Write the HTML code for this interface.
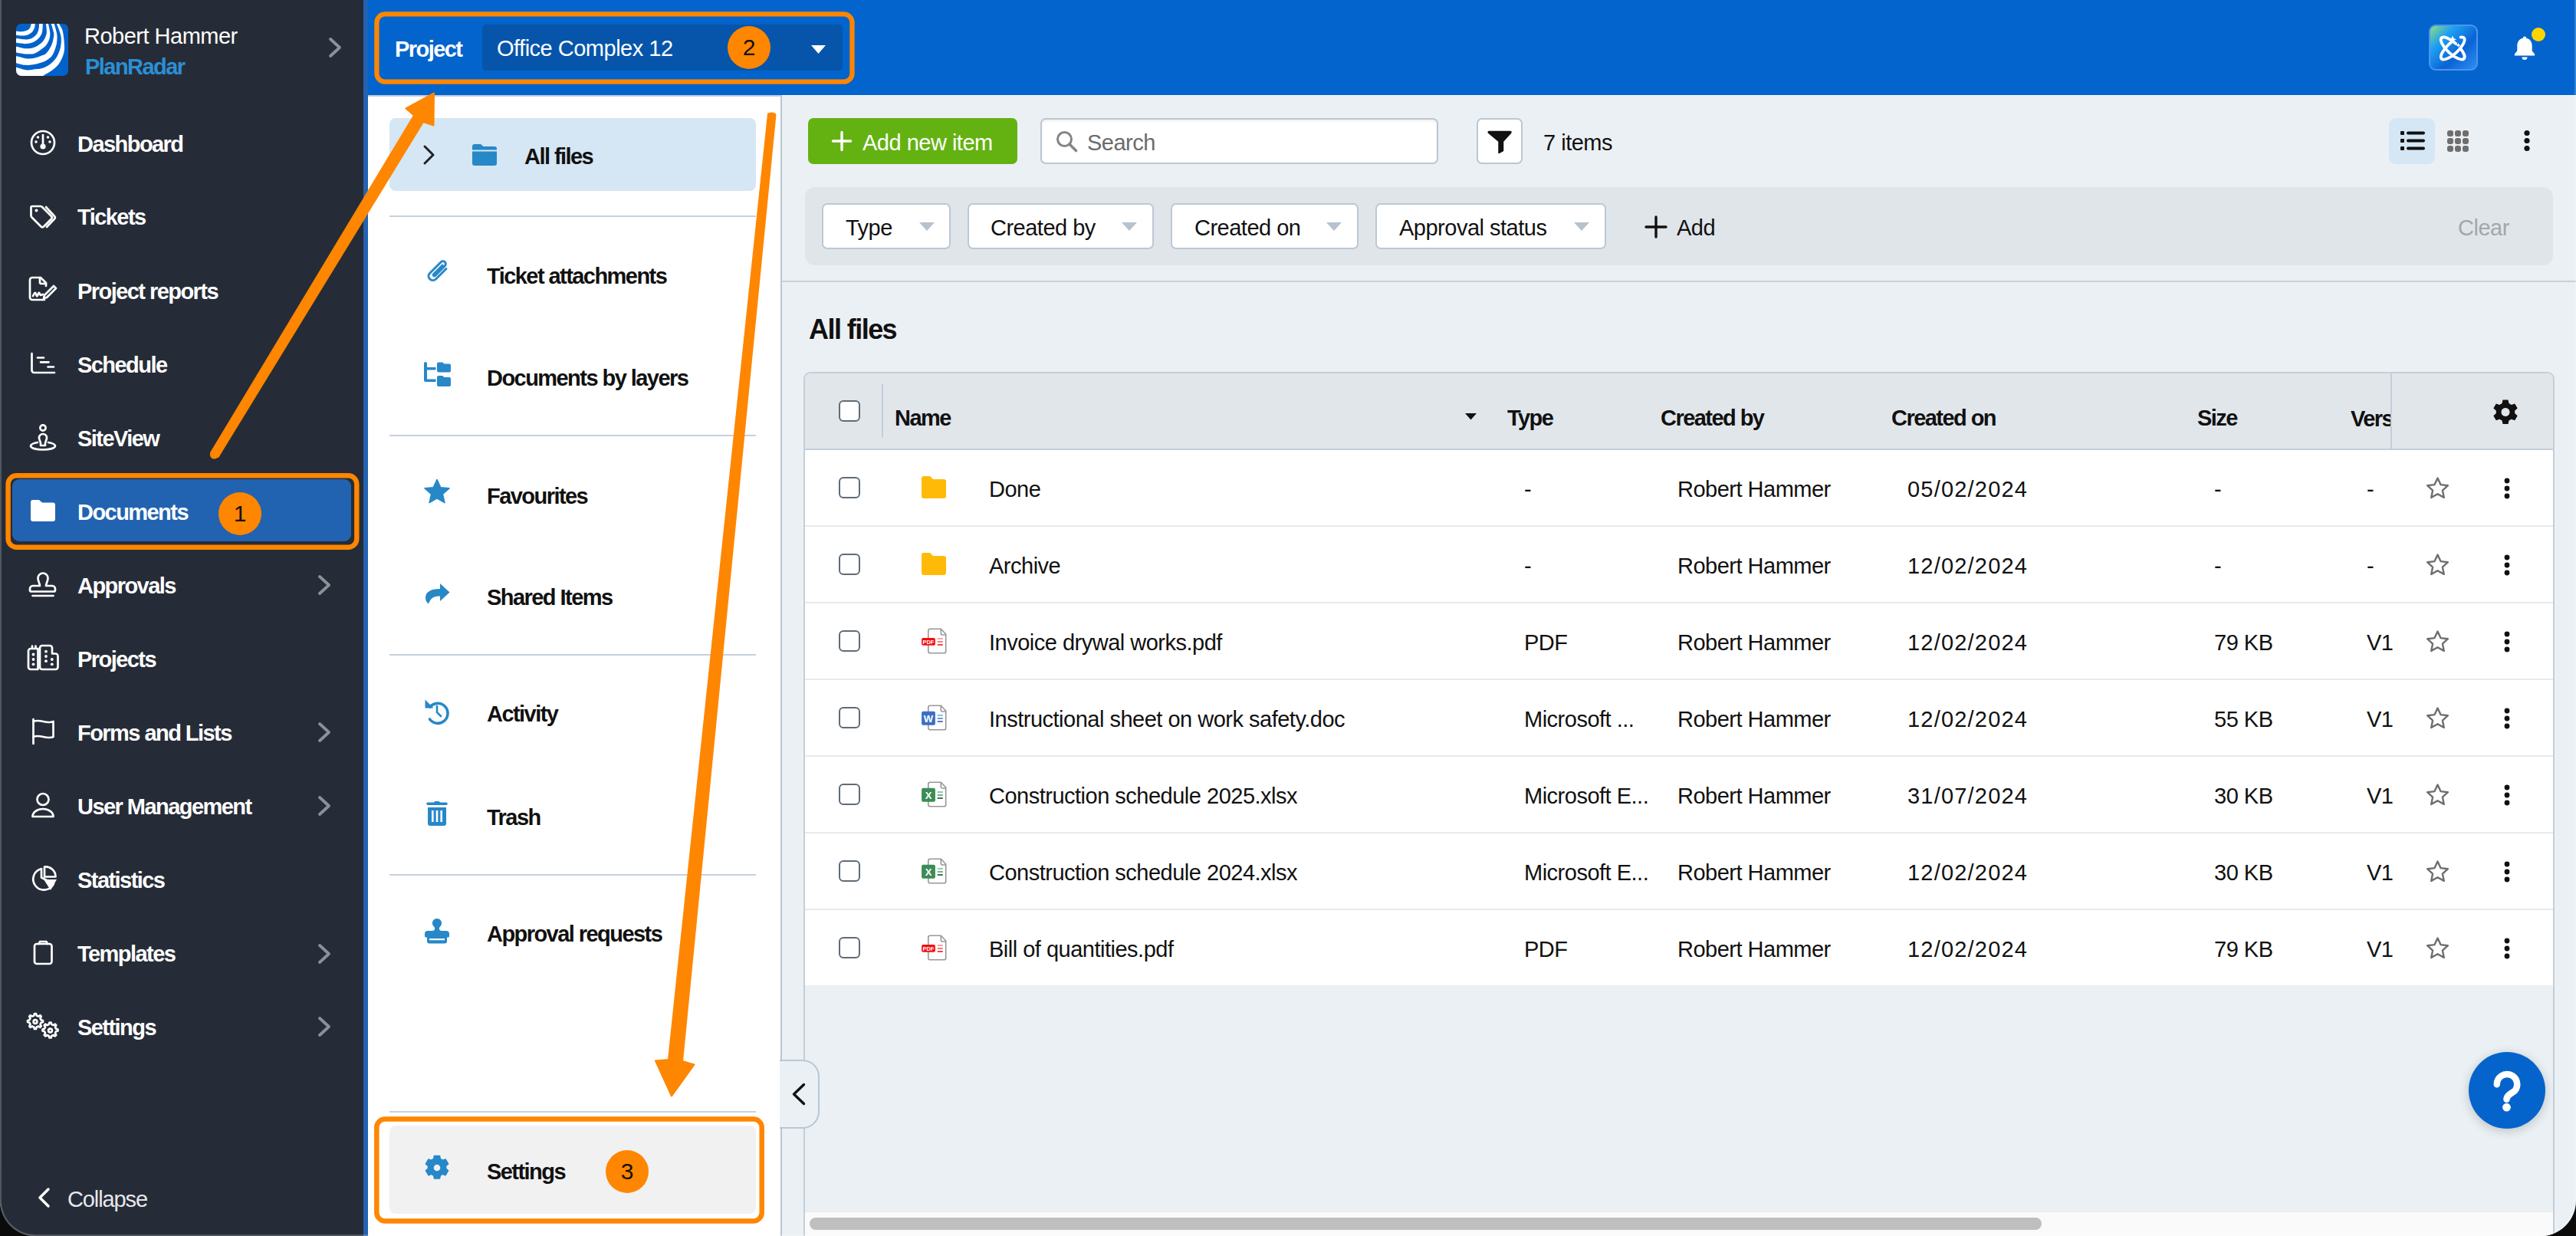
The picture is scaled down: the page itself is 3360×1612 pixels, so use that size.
<!DOCTYPE html>
<html><head><meta charset="utf-8">
<style>
*{margin:0;padding:0;box-sizing:border-box}
html,body{width:3360px;height:1612px;overflow:hidden;background:#0b0b0c;font-family:"Liberation Sans",sans-serif}
.a{position:absolute}
.t{position:absolute;white-space:nowrap;font-size:29px;line-height:28px;color:#111;letter-spacing:-0.5px;margin-top:1px;margin-left:-1px}
.b{font-weight:bold;letter-spacing:-1.55px;margin-left:0}
svg{position:absolute;overflow:visible}
#app{left:0;top:0;width:3360px;height:1612px;border-radius:0 0 46px 46px;overflow:hidden;background:#ebf0f4}
/* sidebar */
#side{left:0;top:0;width:480px;height:1612px;background:#262c37}
.si{color:#fff}
.chev{stroke:#8b9099;stroke-width:3.8;fill:none;stroke-linecap:round;stroke-linejoin:round}
.ico{stroke:#fff;stroke-width:2.7;fill:none;stroke-linecap:round;stroke-linejoin:round}
/* top bar */
#top{left:480px;top:0;width:2880px;height:124px;background:#0264cc}
/* panel */
#panel{left:480px;top:124px;width:540px;height:1488px;background:#fff;border-right:2px solid #b9c5d1;border-top:2px solid #c6cdd4}
.pi{color:#111}
.pico{fill:#2788c8}
.sep{position:absolute;left:508px;width:478px;height:2px;background:#c6d1dc}
/* main */
.chip{position:absolute;top:265px;height:60px;background:#fff;border:2px solid #bcc8d4;border-radius:7px}
.caret{position:absolute;width:0;height:0;border-left:10px solid transparent;border-right:10px solid transparent;border-top:10px solid #b5c1cd}
.cb{position:absolute;left:1094px;width:28px;height:28px;border:2.5px solid #5f6b78;border-radius:6px;background:#fff}
.row{position:absolute;left:1050px;width:2280px;height:2px;background:#e6eaee}
.star{fill:none;stroke:#6e6e6e;stroke-width:2.4;stroke-linejoin:round}
.keb{fill:#111}
.orange{border:5px solid #ff8600}
.badge{position:absolute;width:56px;height:56px;border-radius:50%;background:#ff8600;color:#111;font-size:30px;line-height:56px;text-align:center}
</style></head><body>
<div id="app" class="a">

<!-- ================= SIDEBAR ================= -->
<div id="side" class="a">
  
  <div class="a" style="left:474px;top:0;width:6px;height:1612px;background:#2363b3"></div>
  <!-- logo -->
  <svg style="left:21px;top:31px" width="68" height="68" viewBox="0 0 68 68">
    <defs><clipPath id="lc"><rect x="0" y="0" width="68" height="68" rx="7"/></clipPath></defs>
    <rect x="0" y="0" width="68" height="68" rx="7" fill="#0262cc"/>
    <g clip-path="url(#lc)" fill="#fff">
    <path d="M19.8,0 C19.48,0.92 18.90,4.03 17.90,5.50 C16.90,6.97 15.63,8.02 13.80,8.80 C11.97,9.58 9.20,10.10 6.90,10.20 C4.60,10.30 1.15,9.53 0.00,9.40 L0,15.1 C0.92,15.15 3.20,15.40 5.50,15.40 C7.80,15.40 11.28,15.83 13.80,15.10 C16.32,14.37 18.92,12.60 20.60,11.00 C22.28,9.40 23.20,7.33 23.90,5.50 C24.60,3.67 24.65,0.92 24.80,0.00Z"/>
    <path d="M30,0 C29.95,0.92 30.12,3.43 29.70,5.50 C29.28,7.57 28.78,10.33 27.50,12.40 C26.22,14.47 24.28,16.57 22.00,17.90 C19.72,19.23 16.55,20.08 13.80,20.40 C11.05,20.72 7.80,20.03 5.50,19.80 C3.20,19.57 0.92,19.13 0.00,19.00 L0,24.8 C0.92,24.93 3.20,25.38 5.50,25.60 C7.80,25.82 10.82,26.47 13.80,26.10 C16.78,25.73 20.65,24.77 23.40,23.40 C26.15,22.03 28.53,19.97 30.30,17.90 C32.07,15.83 33.25,13.98 34.00,11.00 C34.75,8.02 34.67,1.83 34.80,0.00Z"/>
    <path d="M39,0 C39.13,1.38 39.72,5.96 39.80,8.25 C39.88,10.54 39.92,11.91 39.50,13.75 C39.08,15.59 38.22,17.59 37.30,19.30 C36.38,21.01 35.63,22.40 34.00,24.00 C32.37,25.60 29.95,27.58 27.50,28.90 C25.05,30.22 22.05,31.35 19.30,31.90 C16.55,32.45 13.76,32.47 11.00,32.20 C8.24,31.93 4.58,30.72 2.75,30.30 C0.92,29.88 0.46,29.80 0.00,29.70 L0,37.6 C1.38,37.83 5.50,38.63 8.25,38.95 C11.00,39.27 13.74,39.59 16.50,39.50 C19.26,39.41 21.88,39.57 24.80,38.40 C27.72,37.23 31.55,34.32 34.00,32.50 C36.45,30.68 37.90,29.70 39.50,27.50 C41.10,25.30 42.82,22.05 43.60,19.30 C44.38,16.55 44.47,14.22 44.20,11.00 C43.93,7.78 42.37,1.83 42.00,0.00Z"/>
    <path d="M45.8,0 C46.32,1.83 48.35,8.25 48.90,11.00 C49.45,13.75 49.43,13.98 49.10,16.50 C48.77,19.02 47.95,23.18 46.90,26.10 C45.85,29.02 44.27,31.77 42.80,34.00 C41.33,36.23 39.57,38.28 38.10,39.50 C36.63,40.72 36.22,40.47 34.00,41.30 C31.78,42.13 27.72,43.78 24.80,44.50 C21.88,45.22 19.26,45.65 16.50,45.60 C13.74,45.55 11.00,44.78 8.25,44.20 C5.50,43.62 1.38,42.45 0.00,42.10 L0,51.2 C1.83,51.63 7.33,53.45 11.00,53.80 C14.67,54.15 18.17,53.90 22.00,53.30 C25.83,52.70 31.08,51.12 34.00,50.20 C36.92,49.28 37.43,49.08 39.50,47.75 C41.57,46.42 44.57,44.54 46.40,42.25 C48.23,39.96 49.40,36.91 50.50,34.00 C51.60,31.09 52.53,28.18 53.00,24.80 C53.47,21.43 53.85,17.88 53.30,13.75 C52.75,9.62 50.30,2.29 49.70,0.00Z"/>
    <path d="M53,0 C53.82,2.29 56.93,9.85 57.90,13.75 C58.87,17.65 58.95,20.02 58.80,23.40 C58.65,26.77 58.15,30.40 57.00,34.00 C55.85,37.60 54.13,41.79 51.90,45.00 C49.67,48.21 46.58,51.08 43.60,53.25 C40.62,55.42 37.13,56.99 34.00,58.00 C30.87,59.01 28.18,58.90 24.80,59.30 C21.43,59.70 17.88,60.82 13.75,60.40 C9.62,59.98 2.29,57.40 0.00,56.80 L0,68 L35,68 C35.29,67.83 34.62,68.32 36.75,67.00 C38.88,65.68 44.54,62.62 47.75,60.10 C50.96,57.58 53.79,54.88 56.00,51.90 C58.21,48.92 59.85,45.23 61.00,42.25 C62.15,39.27 62.58,36.46 62.90,34.00 C63.22,31.54 63.00,29.95 62.90,27.50 C62.80,25.05 62.72,22.51 62.30,19.30 C61.88,16.09 61.45,11.47 60.40,8.25 C59.35,5.03 56.73,1.38 56.00,0.00Z"/>
    </g>
  </svg>
  <div class="t" style="left:111px;top:32px;color:#fff">Robert Hammer</div>
  <div class="t b" style="left:111px;top:72px;color:#2a8fd6">PlanRadar</div>
  <svg style="left:0;top:0" width="480" height="1612">
    <polyline class="chev" points="431,51 443,62 431,73"/>
    <polyline class="chev" points="417,752 429,763 417,774"/>
    <polyline class="chev" points="417,944 429,955 417,966"/>
    <polyline class="chev" points="417,1040 429,1051 417,1062"/>
    <polyline class="chev" points="417,1233 429,1244 417,1255"/>
    <polyline class="chev" points="417,1328 429,1339 417,1350"/>
  </svg>
  <!-- active documents -->
  <svg style="left:0;top:600px" width="480" height="130"><rect x="10.6" y="20.2" width="454.7" height="93.5" rx="11" fill="none" stroke="#ff8600" stroke-width="6.4"/></svg>
  <div class="a" style="left:16px;top:625px;width:442px;height:81px;background:#2163b0;border-radius:9px"></div>
  <!-- icons -->
  <svg style="left:0;top:0" width="480" height="1612">
    <g class="ico">
      <!-- dashboard -->
      <circle cx="56" cy="186" r="15"/>
      <line x1="56" y1="176" x2="56" y2="189"/>
    </g>
    <g fill="#fff">
      <circle cx="56" cy="191" r="3.6"/>
      <circle cx="47" cy="185" r="1.8"/><circle cx="49.5" cy="179" r="1.8"/>
      <circle cx="62.5" cy="179" r="1.8"/><circle cx="65" cy="185" r="1.8"/>
    </g>
    <g class="ico">
      <!-- tickets -->
      <path d="M42,269 h11 a3,3 0 0 1 2,1 l12,12 a2.5,2.5 0 0 1 0,3.5 l-10,10 a2.5,2.5 0 0 1 -3.5,0 l-12,-12 a3,3 0 0 1 -1,-2 v-11 a1.5,1.5 0 0 1 1.5,-1.5z"/>
      <path d="M60,270 l11,12 a2.5,2.5 0 0 1 0,3.5 l-10,10.5"/>
    </g>
    <circle cx="47.5" cy="274.5" r="2" fill="#fff"/>
    <g class="ico">
      <!-- project reports -->
      <path d="M58,391 h-16 a3,3 0 0 1 -3,-3 v-23 a3,3 0 0 1 3,-3 h11 l7,7 v4"/>
      <path d="M52,362 v6 a2,2 0 0 0 2,2 h6"/>
      <path d="M43,386 c2,-4 3,-6 4,-2 c1,3 2,3 3,-1 c1,-3 2,1 3,2 l3,-1"/>
      <path d="M58,385 l12,-12 l3,3 l-12,12 l-4,1z"/>
      <!-- schedule -->
      <path d="M41.5,461 v22 a3,3 0 0 0 3,3 h26.5"/>
      <path d="M49,466.5 h8 M53,472.3 h10.5 M62.5,478.5 h7.5"/>
      <!-- siteview -->
      <circle cx="56" cy="558" r="3.6"/>
      <path d="M51,571 a5,5 0 0 1 10,0 c0,3 -2,5 -2,7 v3 h-6 v-3 c0,-2 -2,-4 -2,-7z"/>
      <path d="M49,577 c-5,1 -9,2.5 -9,4.5 c0,3 7,5 16,5 c9,0 16,-2 16,-5 c0,-2 -4,-3.5 -9,-4.5"/>
      <!-- approvals -->
      <path d="M52,764 c0,-3 -2.5,-6 -2.5,-10 a6.5,6.5 0 0 1 13,0 c0,4 -2.5,7 -2.5,10 h8 a4,4 0 0 1 4,4 v1.5 a2,2 0 0 1 -2,2 h-29 a2,2 0 0 1 -2,-2 v-1.5 a4,4 0 0 1 4,-4z"/>
      <path d="M42.5,777 h27"/>
      <!-- projects -->
      <path d="M49.5,846 v27 h-9.5 a3,3 0 0 1 -3,-3 v-21 a3,3 0 0 1 3,-3z M42,846 v-3.5 M46.5,846 v-3.5"/>
      <path d="M55,873 a3,3 0 0 1 -3,-3 v-25 a3,3 0 0 1 3,-3 h10 a3,3 0 0 1 3,3 v7.5 h4.5 a3,3 0 0 1 3,3 v14.5 a3,3 0 0 1 -3,3z"/>
      <!-- forms -->
      <path d="M43.5,938 v32"/>
      <path d="M43.5,941 c9,-4 17,4 26,0 v20 c-9,4 -17,-4 -26,0"/>
      <!-- user -->
      <circle cx="56" cy="1042.5" r="7.5"/>
      <path d="M42.5,1065 h27 a13.5,10 0 0 0 -27,0z"/>
      <!-- statistics -->
      <path d="M54,1133 a14,14 0 1 0 16,19.5 l-16,-8z"/>
      <path d="M58,1130.5 a13,13 0 0 1 14.5,13 h-14.5z"/>
      <!-- templates -->
      <rect x="45" y="1231" width="22.5" height="26" rx="3"/>
      <path d="M50.5,1231 l1.5,-3 h8.5 l1.5,3"/>
    </g>
    <path d="M57,1147 h17 l-8,14z" fill="#fff"/>
    <g fill="#fff"><circle cx="43.5" cy="853.5" r="1.9"/><circle cx="43.5" cy="860" r="1.9"/><circle cx="43.5" cy="866.3" r="1.9"/>
    <circle cx="60" cy="849.7" r="1.9"/><circle cx="60" cy="856" r="1.9"/><circle cx="60" cy="862.2" r="1.9"/><circle cx="67.8" cy="860" r="1.9"/><circle cx="67.8" cy="866.3" r="1.9"/></g>
    <!-- documents folder filled -->
    <path d="M40,655 a3,3 0 0 1 3,-3 h8 l4,3.5 h14 a3,3 0 0 1 3,3 v18.5 a3,3 0 0 1 -3,3 h-26 a3,3 0 0 1 -3,-3z" fill="#fff"/>
    <!-- settings gears -->
    <g class="ico" stroke-width="2.2">
      <path transform="translate(0,5.5)" d="M45,1316.5 l2,0 l0.8,2.5 l2.3,1 l2.3,-1.3 l1.4,1.4 l-1.3,2.3 l1,2.3 l2.5,0.8 v2 l-2.5,0.8 l-1,2.3 l1.3,2.3 l-1.4,1.4 l-2.3,-1.3 l-2.3,1 l-0.8,2.5 h-2 l-0.8,-2.5 l-2.3,-1 l-2.3,1.3 l-1.4,-1.4 l1.3,-2.3 l-1,-2.3 l-2.5,-0.8 v-2 l2.5,-0.8 l1,-2.3 l-1.3,-2.3 l1.4,-1.4 l2.3,1.3 l2.3,-1 z"/>
      <circle cx="46" cy="1332.5" r="2.4"/>
      <path transform="translate(19.5,17)" d="M45,1316.5 l2,0 l0.8,2.5 l2.3,1 l2.3,-1.3 l1.4,1.4 l-1.3,2.3 l1,2.3 l2.5,0.8 v2 l-2.5,0.8 l-1,2.3 l1.3,2.3 l-1.4,1.4 l-2.3,-1.3 l-2.3,1 l-0.8,2.5 h-2 l-0.8,-2.5 l-2.3,-1 l-2.3,1.3 l-1.4,-1.4 l1.3,-2.3 l-1,-2.3 l-2.5,-0.8 v-2 l2.5,-0.8 l1,-2.3 l-1.3,-2.3 l1.4,-1.4 l2.3,1.3 l2.3,-1 z"/>
      <circle cx="65.5" cy="1344" r="2.4"/>
    </g>
    <!-- collapse chevron -->
    <polyline points="63,1551 52,1562 63,1573" fill="none" stroke="#fff" stroke-width="3.5" stroke-linecap="round" stroke-linejoin="round"/>
  </svg>
  <div class="t b si" style="left:101px;top:173px">Dashboard</div>
  <div class="t b si" style="left:101px;top:268px">Tickets</div>
  <div class="t b si" style="left:101px;top:365px">Project reports</div>
  <div class="t b si" style="left:101px;top:461px">Schedule</div>
  <div class="t b si" style="left:101px;top:557px">SiteView</div>
  <div class="t b si" style="left:101px;top:653px">Documents</div>
  <div class="t b si" style="left:101px;top:749px">Approvals</div>
  <div class="t b si" style="left:101px;top:845px">Projects</div>
  <div class="t b si" style="left:101px;top:941px">Forms and Lists</div>
  <div class="t b si" style="left:101px;top:1037px">User Management</div>
  <div class="t b si" style="left:101px;top:1133px">Statistics</div>
  <div class="t b si" style="left:101px;top:1229px">Templates</div>
  <div class="t b si" style="left:101px;top:1325px">Settings</div>
  <div class="t" style="left:89px;top:1549px;color:#e6e8eb;letter-spacing:-1.1px">Collapse</div>
  <div class="badge" style="left:285px;top:642px">1</div>
</div>

<!-- ================= TOP BAR ================= -->
<div id="top" class="a">
</div>
<div class="a" style="left:1020px;top:124px;width:2340px;height:1px;background:#fafaf9"></div>
<!-- project selector -->
<svg style="left:480px;top:0" width="660" height="124"><rect x="11.4" y="18.4" width="620.1" height="88.3" rx="11" fill="none" stroke="#ff8600" stroke-width="6.3"/></svg>
<div class="t b" style="left:515px;top:49px;color:#fff">Project</div>
<div class="a" style="left:629px;top:32px;width:470px;height:60px;background:#0755aa;border-radius:5px"></div>
<div class="t" style="left:649px;top:48px;color:#fff">Office Complex 12</div>
<div class="badge" style="left:949px;top:34px">2</div>
<svg style="left:1058px;top:59px" width="19" height="12"><path d="M0,0 h19 l-9.5,11z" fill="#fff"/></svg>
<!-- AI button -->
<div class="a" style="left:3168px;top:32px;width:64px;height:60px;border-radius:9px;border:2px solid #4c93f0;background:linear-gradient(135deg,#8fe07a 0%,#1ea0f4 28%,#0b63d4 62%,#2f8df2 100%)"></div>
<svg style="left:3168px;top:32px" width="64" height="60" viewBox="0 0 64 60">
  <g fill="none" stroke="#fff" stroke-width="3.8" stroke-linecap="round">
    <ellipse cx="31.2" cy="31" rx="20" ry="7.2" transform="rotate(43 31.2 31)" stroke-dasharray="66 9 200"/>
    <ellipse cx="31.2" cy="31" rx="20" ry="7.2" transform="rotate(-43 31.2 31)" stroke-dasharray="73 12 200"/>
  </g>
  <path d="M31,14.5 l1.6,3.4 l3.4,1.6 l-3.4,1.6 l-1.6,3.4 l-1.6,-3.4 l-3.4,-1.6 l3.4,-1.6z" fill="#fff"/>
  <path d="M38.5,24 l1,2 l2,1 l-2,1 l-1,2 l-1,-2 l-2,-1 l2,-1z" fill="#fff"/>
</svg>
<!-- bell -->
<svg style="left:3278px;top:46px" width="30" height="34" viewBox="0 0 30 34">
  <path d="M15,1.5 c1.5,0 2.2,1 2.2,2.2 c5,1.2 7.5,5 7.5,10 v6.5 l3.5,4.5 v1.8 h-26.4 v-1.8 l3.5,-4.5 v-6.5 c0,-5 2.5,-8.8 7.5,-10 c0,-1.2 0.7,-2.2 2.2,-2.2z" fill="#fff"/>
  <path d="M11.5,28.5 h7 a3.5,3.5 0 0 1 -7,0z" fill="#fff"/>
</svg>
<div class="a" style="left:3302px;top:36px;width:18px;height:18px;border-radius:50%;background:#ffd400"></div>

<!-- ================= PANEL ================= -->
<div id="panel" class="a"></div>
<div class="a" style="left:508px;top:154px;width:478px;height:95px;background:#d5e6f4;border-radius:8px"></div>
<svg style="left:0;top:0" width="1020" height="1612">
  <polyline points="554,191 565,202 554,213" fill="none" stroke="#222" stroke-width="3" stroke-linecap="round" stroke-linejoin="round"/>
  <g fill="#2788c8">
    <!-- all files folder -->
    <path d="M616,191 a3,3 0 0 1 3,-3 h8 l3.5,3 h14.5 a3,3 0 0 1 3,3 v1.5 h-32z"/>
    <path d="M616,197.5 h32 v15.5 a3,3 0 0 1 -3,3 h-26 a3,3 0 0 1 -3,-3z"/>
    <!-- docs by layers -->
    <path d="M553,474 a2,2 0 0 1 4,0 v5 h11.5 v3.5 h-11.5 v12 h11.5 v3.5 h-13.5 a2,2 0 0 1 -2,-2z"/>
    <path d="M570,474.5 a2,2 0 0 1 2,-2 h5 l2.5,2 h6.5 a2,2 0 0 1 2,2 v7 a2,2 0 0 1 -2,2 h-14 a2,2 0 0 1 -2,-2z"/>
    <path d="M570,492 a2,2 0 0 1 2,-2 h5 l2.5,2 h6.5 a2,2 0 0 1 2,2 v8 a2,2 0 0 1 -2,2 h-14 a2,2 0 0 1 -2,-2z"/>
    <!-- star -->
    <path d="M570,625.5 l4.6,10.2 l11.3,1.1 l-8.5,7.6 l2.5,11.2 l-9.9,-5.8 l-9.9,5.8 l2.5,-11.2 l-8.5,-7.6 l11.3,-1.1z" stroke="#2788c8" stroke-width="1.6" stroke-linejoin="round"/>
    <!-- share -->
    <path d="M574,761 l12.5,11.5 l-12.5,11.5 v-6.5 c-8,0 -12,2 -15,10 c-3,-2 -4,-5 -4,-8 c0,-7 6,-11.5 19,-11.5z"/>
    <!-- trash -->
    <path d="M566,1046.5 a2,2 0 0 1 2,-1.5 h4 a2,2 0 0 1 2,1.5 h8 a1.8,1.8 0 0 1 0,3.6 h-24 a1.8,1.8 0 0 1 0,-3.6z"/>
    <path d="M558,1053 h24 v21 a3,3 0 0 1 -3,3 h-18 a3,3 0 0 1 -3,-3z M563,1057 v15 h2.6 v-15z M568.7,1057 v15 h2.6 v-15z M574.4,1057 v15 h2.6 v-15z" fill-rule="evenodd"/>
    <!-- approval stamp -->
    <path d="M570,1198 a6,6 0 0 1 4,10.5 c-1,1 -1.2,2.5 -1,3.5 c0.5,1.2 1.5,2 3,2 h6 a4,4 0 0 1 4,4 v3 a1.5,1.5 0 0 1 -1.5,1.5 h-1.5 v5 a3,3 0 0 1 -3,3 h-20 a3,3 0 0 1 -3,-3 v-5 h-1.5 a1.5,1.5 0 0 1 -1.5,-1.5 v-3 a4,4 0 0 1 4,-4 h6 c1.5,0 2.5,-0.8 3,-2 c0.2,-1 0,-2.5 -1,-3.5 a6,6 0 0 1 4,-10.5z M560,1224 v2.2 h20 v-2.2z" fill-rule="evenodd"/>
    <!-- gear -->
    <path d="M566.5,1507.5 h7 l0.8,4 l3,1.7 l3.8,-1.3 l3.5,6 l-3,2.7 v3.4 l3,2.7 l-3.5,6 l-3.8,-1.3 l-3,1.7 l-0.8,4 h-7 l-0.8,-4 l-3,-1.7 l-3.8,1.3 l-3.5,-6 l3,-2.7 v-3.4 l-3,-2.7 l3.5,-6 l3.8,1.3 l3,-1.7z M570,1518 a5,5 0 1 0 0.01,0z" fill-rule="evenodd" stroke="#2788c8" stroke-width="1.5" stroke-linejoin="round"/>
  </g>
  <g fill="none" stroke="#2788c8" stroke-linecap="round">
    <!-- paperclip -->
    <path d="M582,350.5 l-13.5,13.5 a5.5,5.5 0 0 1 -7.8,-7.8 l14.5,-14.5 a3.6,3.6 0 0 1 5.1,5.1 l-12.7,12.7 a1.4,1.4 0 0 1 -2,-2 l11.5,-11.5" stroke-width="3"/>
    <!-- activity -->
    <path d="M561,922 a13,13 0 1 1 -0.5,16" stroke-width="3.6"/>
    <path d="M570,921 v8 l5,5" stroke-width="2.6"/>
  </g>
  <path d="M554.5,912.5 l11,11 h-11z" fill="#2788c8"/>
</svg>
<div class="sep" style="top:281px"></div>
<div class="sep" style="top:567px"></div>
<div class="sep" style="top:853px"></div>
<div class="sep" style="top:1140px"></div>
<div class="sep" style="top:1449px"></div>
<div class="t b pi" style="left:684px;top:189px">All files</div>
<div class="t b pi" style="left:635px;top:345px">Ticket attachments</div>
<div class="t b pi" style="left:635px;top:478px">Documents by layers</div>
<div class="t b pi" style="left:635px;top:632px">Favourites</div>
<div class="t b pi" style="left:635px;top:764px">Shared Items</div>
<div class="t b pi" style="left:635px;top:916px">Activity</div>
<div class="t b pi" style="left:635px;top:1051px">Trash</div>
<div class="t b pi" style="left:635px;top:1203px">Approval requests</div>
<!-- settings -->
<svg style="left:480px;top:1440px" width="540" height="172"><rect x="11.3" y="19.6" width="502.4" height="132.8" rx="11" fill="none" stroke="#ff8600" stroke-width="6.5"/></svg>
<div class="a" style="left:508px;top:1468px;width:478px;height:115px;background:#f1f1f2;border-radius:8px"></div>
<svg style="left:0;top:0" width="1020" height="1612">
  <path fill="#2788c8" d="M566.5,1507.5 h7 l0.8,4 l3,1.7 l3.8,-1.3 l3.5,6 l-3,2.7 v3.4 l3,2.7 l-3.5,6 l-3.8,-1.3 l-3,1.7 l-0.8,4 h-7 l-0.8,-4 l-3,-1.7 l-3.8,1.3 l-3.5,-6 l3,-2.7 v-3.4 l-3,-2.7 l3.5,-6 l3.8,1.3 l3,-1.7z M570,1518 a5,5 0 1 0 0.01,0z" fill-rule="evenodd" stroke="#2788c8" stroke-width="1.5" stroke-linejoin="round"/>
</svg>
<div class="t b pi" style="left:635px;top:1513px">Settings</div>
<div class="badge" style="left:790px;top:1500px">3</div>

<!-- ================= MAIN ================= -->
<!-- toolbar -->
<div class="a" style="left:1054px;top:154px;width:273px;height:60px;background:#63b212;border-radius:7px"></div>
<svg style="left:1085px;top:171px" width="26" height="26"><path d="M13,1.5 v23 M1.5,13 h23" stroke="#fff" stroke-width="3.4" stroke-linecap="round"/></svg>
<div class="t" style="left:1126px;top:170px;color:#fff;font-size:29px;line-height:30px">Add new item</div>
<div class="a" style="left:1357px;top:154px;width:519px;height:60px;background:#fff;border:2px solid #bac7d3;border-radius:7px;box-shadow:inset 0 2px 3px rgba(0,0,0,0.07)"></div>
<svg style="left:1377px;top:170px" width="30" height="30"><circle cx="11.5" cy="11.5" r="9" fill="none" stroke="#858585" stroke-width="3"/><path d="M18.5,18.5 l8,8" stroke="#858585" stroke-width="3.6" stroke-linecap="round"/></svg>
<div class="t" style="left:1419px;top:170px;color:#6b6b6b;font-size:29px;line-height:30px">Search</div>
<div class="a" style="left:1926px;top:154px;width:60px;height:60px;background:#fff;border:2px solid #bac7d3;border-radius:7px"></div>
<svg style="left:1940px;top:170px" width="32" height="30"><path d="M2,1.5 h28 a1,1 0 0 1 0.7,1.7 l-10.2,11.3 v12 l-5.5,3 v-15 l-13.5,-11.3 a1,1 0 0 1 0.5,-1.7z" fill="#111" stroke="#111" stroke-width="1.5" stroke-linejoin="round"/></svg>
<div class="t" style="left:2014px;top:170px;font-size:29px;line-height:30px">7 items</div>
<div class="a" style="left:3116px;top:154px;width:60px;height:60px;background:#d5e6f5;border-radius:9px"></div>
<svg style="left:3116px;top:154px" width="60" height="60">
  <g fill="#111"><rect x="15" y="17" width="5" height="5" rx="1"/><rect x="15" y="27" width="5" height="5" rx="1"/><rect x="15" y="37" width="5" height="5" rx="1"/></g>
  <g stroke="#111" stroke-width="4" stroke-linecap="round"><path d="M25,19.5 h20 M25,29.5 h20 M25,39.5 h20"/></g>
</svg>
<svg style="left:3192px;top:170px" width="30" height="30"><g fill="#6e6e6e"><rect x="0" y="0" width="8" height="8" rx="3"/><rect x="10" y="0" width="8" height="8" rx="3"/><rect x="20" y="0" width="8" height="8" rx="3"/><rect x="0" y="10" width="8" height="8" rx="3"/><rect x="10" y="10" width="8" height="8" rx="3"/><rect x="20" y="10" width="8" height="8" rx="3"/><rect x="0" y="20" width="8" height="8" rx="3"/><rect x="10" y="20" width="8" height="8" rx="3"/><rect x="20" y="20" width="8" height="8" rx="3"/></g></svg>
<svg style="left:3290px;top:168px" width="12" height="32"><g fill="#111"><circle cx="6" cy="5.5" r="3.6"/><circle cx="6" cy="15.5" r="3.6"/><circle cx="6" cy="25.5" r="3.6"/></g></svg>
<!-- filter bar -->
<div class="a" style="left:1050px;top:244px;width:2280px;height:102px;background:#e0e5ea;border-radius:13px"></div>
<div class="chip" style="left:1072px;width:168px"></div>
<div class="chip" style="left:1262px;width:243px"></div>
<div class="chip" style="left:1527px;width:245px"></div>
<div class="chip" style="left:1794px;width:301px"></div>
<div class="t" style="left:1104px;top:282px">Type</div>
<div class="t" style="left:1293px;top:282px">Created by</div>
<div class="t" style="left:1559px;top:282px">Created on</div>
<div class="t" style="left:1826px;top:282px">Approval status</div>
<svg style="left:0;top:0" width="3360" height="400"><g fill="#b6c2ce">
  <path d="M1199,290 h20 l-10,11z"/><path d="M1463,290 h20 l-10,11z"/><path d="M1730,290 h20 l-10,11z"/><path d="M2053,290 h20 l-10,11z"/></g>
  <path d="M2160,283 v26 M2147,296 h26" stroke="#111" stroke-width="3.4" stroke-linecap="round"/>
</svg>
<div class="t" style="left:2188px;top:282px">Add</div>
<div class="t" style="left:3207px;top:282px;color:#a3a7ab">Clear</div>
<div class="a" style="left:1019px;top:366px;width:2341px;height:2px;background:#c6d0da"></div>
<!-- heading -->
<div class="t b" style="left:1055px;top:411px;font-size:36px;line-height:36px">All files</div>
<!-- table container -->
<div class="a" style="left:1048px;top:485px;width:2284px;height:1200px;border:2px solid #c4ced9;border-radius:9px;background:#ebf0f4"></div>
<div class="a" style="left:1050px;top:487px;width:2280px;height:98px;background:#e1e6eb;border-radius:8px 8px 0 0"></div>
<div class="a" style="left:1050px;top:585px;width:2280px;height:2px;background:#c4ced9"></div>
<div class="a" style="left:1050px;top:587px;width:2280px;height:698px;background:#fff"></div>
<div class="row" style="top:685px"></div>
<div class="row" style="top:785px"></div>
<div class="row" style="top:885px"></div>
<div class="row" style="top:985px"></div>
<div class="row" style="top:1085px"></div>
<div class="row" style="top:1185px"></div>
<div class="a" style="left:1150px;top:501px;width:2px;height:70px;background:#c4ced9"></div>
<div class="a" style="left:3118px;top:487px;width:2px;height:98px;background:#c4ced9"></div>
<div class="cb" style="top:522px"></div>
<div class="t b" style="left:1167px;top:530px">Name</div>
<svg style="left:1911px;top:539px" width="16" height="9"><path d="M0,0 h15 l-7.5,8.5z" fill="#111"/></svg>
<div class="t b" style="left:1966px;top:530px">Type</div>
<div class="t b" style="left:2166px;top:530px">Created by</div>
<div class="t b" style="left:2467px;top:530px">Created on</div>
<div class="t b" style="left:2866px;top:530px">Size</div>
<div class="a" style="left:3066px;top:520px;width:52px;height:40px;overflow:hidden"><div class="t b" style="left:0;top:11px">Version</div></div>
<svg style="left:3250px;top:520px" width="36" height="36" viewBox="0 0 36 36"><path fill="#111" fill-rule="evenodd" d="M14.5,1.5 h7 l1,4.6 l3.2,1.8 l4.5,-1.5 l3.5,6 l-3.5,3.1 v3.6 l3.5,3.1 l-3.5,6 l-4.5,-1.5 l-3.2,1.8 l-1,4.6 h-7 l-1,-4.6 l-3.2,-1.8 l-4.5,1.5 l-3.5,-6 l3.5,-3.1 v-3.6 l-3.5,-3.1 l3.5,-6 l4.5,1.5 l3.2,-1.8z M18,12 a5.5,5.5 0 1 0 0.01,0z"/></svg>
<div class="cb" style="top:622px"></div>
<svg style="left:1202px;top:621px" width="32" height="29"><path d="M0,3 a3,3 0 0 1 3,-3 h8 l4,4 h14 a3,3 0 0 1 3,3 v19 a3,3 0 0 1 -3,3 h-26 a3,3 0 0 1 -3,-3z" fill="#ffba08"/></svg>
<div class="t" style="left:1291px;top:623px">Done</div>
<div class="t" style="left:1989px;top:623px">-</div>
<div class="t" style="left:2189px;top:623px">Robert Hammer</div>
<div class="t" style="left:2489px;top:623px;letter-spacing:1.2px">05/02/2024</div>
<div class="t" style="left:2889px;top:623px">-</div>
<div class="t" style="left:3088px;top:623px">-</div>
<svg style="left:3163px;top:621px" width="33" height="32" viewBox="0 0 33 32"><path class="star" d="M16.5,2.5 l4,8.6 l9.4,1.1 l-7,6.4 l1.9,9.3 l-8.3,-4.7 l-8.3,4.7 l1.9,-9.3 l-7,-6.4 l9.4,-1.1z"/></svg>
<svg style="left:3264px;top:623px" width="12" height="30"><g class="keb"><circle cx="6" cy="4" r="3.4"/><circle cx="6" cy="14" r="3.4"/><circle cx="6" cy="24" r="3.4"/></g></svg>
<div class="cb" style="top:722px"></div>
<svg style="left:1202px;top:721px" width="32" height="29"><path d="M0,3 a3,3 0 0 1 3,-3 h8 l4,4 h14 a3,3 0 0 1 3,3 v19 a3,3 0 0 1 -3,3 h-26 a3,3 0 0 1 -3,-3z" fill="#ffba08"/></svg>
<div class="t" style="left:1291px;top:723px">Archive</div>
<div class="t" style="left:1989px;top:723px">-</div>
<div class="t" style="left:2189px;top:723px">Robert Hammer</div>
<div class="t" style="left:2489px;top:723px;letter-spacing:1.2px">12/02/2024</div>
<div class="t" style="left:2889px;top:723px">-</div>
<div class="t" style="left:3088px;top:723px">-</div>
<svg style="left:3163px;top:721px" width="33" height="32" viewBox="0 0 33 32"><path class="star" d="M16.5,2.5 l4,8.6 l9.4,1.1 l-7,6.4 l1.9,9.3 l-8.3,-4.7 l-8.3,4.7 l1.9,-9.3 l-7,-6.4 l9.4,-1.1z"/></svg>
<svg style="left:3264px;top:723px" width="12" height="30"><g class="keb"><circle cx="6" cy="4" r="3.4"/><circle cx="6" cy="14" r="3.4"/><circle cx="6" cy="24" r="3.4"/></g></svg>
<div class="cb" style="top:822px"></div>
<svg style="left:1200px;top:818px" width="36" height="36" viewBox="0 0 36 36"><path d="M10.8,4.6 a2.4,2.4 0 0 1 2.4,-2.4 h14.1 l6.4,6.8 v22.4 a2.4,2.4 0 0 1 -2.4,2.4 h-18.1 a2.4,2.4 0 0 1 -2.4,-2.4z" fill="#fff" stroke="#979797" stroke-width="1.6" stroke-linejoin="round"/><path d="M27.3,2.2 v5.8 a2,2 0 0 0 2,2 h4.4" fill="none" stroke="#979797" stroke-width="1.6"/><rect x="2.1" y="14.1" width="17.8" height="9.7" rx="2" fill="#f50d0d"/><text x="11" y="22" font-size="7.4" font-weight="bold" fill="#fff" text-anchor="middle" font-family="Liberation Sans">PDF</text><path d="M22.8,15 h7" stroke="#ff8a8a" stroke-width="1.6"/><path d="M22.8,19 h7" stroke="#ff5a5a" stroke-width="1.6"/><path d="M22.8,23 h7" stroke="#ee1c1c" stroke-width="1.6"/></svg>
<div class="t" style="left:1291px;top:823px">Invoice drywal works.pdf</div>
<div class="t" style="left:1989px;top:823px">PDF</div>
<div class="t" style="left:2189px;top:823px">Robert Hammer</div>
<div class="t" style="left:2489px;top:823px;letter-spacing:1.2px">12/02/2024</div>
<div class="t" style="left:2889px;top:823px">79 KB</div>
<div class="t" style="left:3088px;top:823px">V1</div>
<svg style="left:3163px;top:821px" width="33" height="32" viewBox="0 0 33 32"><path class="star" d="M16.5,2.5 l4,8.6 l9.4,1.1 l-7,6.4 l1.9,9.3 l-8.3,-4.7 l-8.3,4.7 l1.9,-9.3 l-7,-6.4 l9.4,-1.1z"/></svg>
<svg style="left:3264px;top:823px" width="12" height="30"><g class="keb"><circle cx="6" cy="4" r="3.4"/><circle cx="6" cy="14" r="3.4"/><circle cx="6" cy="24" r="3.4"/></g></svg>
<div class="cb" style="top:922px"></div>
<svg style="left:1200px;top:918px" width="36" height="36" viewBox="0 0 36 36"><path d="M10.8,4.6 a2.4,2.4 0 0 1 2.4,-2.4 h14.1 l6.4,6.8 v22.4 a2.4,2.4 0 0 1 -2.4,2.4 h-18.1 a2.4,2.4 0 0 1 -2.4,-2.4z" fill="#fff" stroke="#979797" stroke-width="1.6" stroke-linejoin="round"/><path d="M27.3,2.2 v5.8 a2,2 0 0 0 2,2 h4.4" fill="none" stroke="#979797" stroke-width="1.6"/><rect x="2.1" y="9.7" width="17.8" height="18" rx="2" fill="#3b6fc5"/><text x="11" y="24" font-size="13" font-weight="bold" fill="#fff" text-anchor="middle" font-family="Liberation Sans">W</text><path d="M22.8,15 h7" stroke="#5fb0ec" stroke-width="1.6"/><path d="M22.8,19 h7" stroke="#3f86d8" stroke-width="1.6"/><path d="M22.8,23 h7" stroke="#2a5fb5" stroke-width="1.6"/></svg>
<div class="t" style="left:1291px;top:923px">Instructional sheet on work safety.doc</div>
<div class="t" style="left:1989px;top:923px">Microsoft ...</div>
<div class="t" style="left:2189px;top:923px">Robert Hammer</div>
<div class="t" style="left:2489px;top:923px;letter-spacing:1.2px">12/02/2024</div>
<div class="t" style="left:2889px;top:923px">55 KB</div>
<div class="t" style="left:3088px;top:923px">V1</div>
<svg style="left:3163px;top:921px" width="33" height="32" viewBox="0 0 33 32"><path class="star" d="M16.5,2.5 l4,8.6 l9.4,1.1 l-7,6.4 l1.9,9.3 l-8.3,-4.7 l-8.3,4.7 l1.9,-9.3 l-7,-6.4 l9.4,-1.1z"/></svg>
<svg style="left:3264px;top:923px" width="12" height="30"><g class="keb"><circle cx="6" cy="4" r="3.4"/><circle cx="6" cy="14" r="3.4"/><circle cx="6" cy="24" r="3.4"/></g></svg>
<div class="cb" style="top:1022px"></div>
<svg style="left:1200px;top:1018px" width="36" height="36" viewBox="0 0 36 36"><path d="M10.8,4.6 a2.4,2.4 0 0 1 2.4,-2.4 h14.1 l6.4,6.8 v22.4 a2.4,2.4 0 0 1 -2.4,2.4 h-18.1 a2.4,2.4 0 0 1 -2.4,-2.4z" fill="#fff" stroke="#979797" stroke-width="1.6" stroke-linejoin="round"/><path d="M27.3,2.2 v5.8 a2,2 0 0 0 2,2 h4.4" fill="none" stroke="#979797" stroke-width="1.6"/><rect x="2.1" y="9.7" width="17.8" height="18" rx="2" fill="#3c8c56"/><text x="11" y="24" font-size="13" font-weight="bold" fill="#fff" text-anchor="middle" font-family="Liberation Sans">X</text><path d="M22.8,15 h7" stroke="#6cc58f" stroke-width="1.6"/><path d="M22.8,19 h7" stroke="#4aa36b" stroke-width="1.6"/><path d="M22.8,23 h7" stroke="#1b4a2b" stroke-width="1.6"/></svg>
<div class="t" style="left:1291px;top:1023px">Construction schedule 2025.xlsx</div>
<div class="t" style="left:1989px;top:1023px">Microsoft E...</div>
<div class="t" style="left:2189px;top:1023px">Robert Hammer</div>
<div class="t" style="left:2489px;top:1023px;letter-spacing:1.2px">31/07/2024</div>
<div class="t" style="left:2889px;top:1023px">30 KB</div>
<div class="t" style="left:3088px;top:1023px">V1</div>
<svg style="left:3163px;top:1021px" width="33" height="32" viewBox="0 0 33 32"><path class="star" d="M16.5,2.5 l4,8.6 l9.4,1.1 l-7,6.4 l1.9,9.3 l-8.3,-4.7 l-8.3,4.7 l1.9,-9.3 l-7,-6.4 l9.4,-1.1z"/></svg>
<svg style="left:3264px;top:1023px" width="12" height="30"><g class="keb"><circle cx="6" cy="4" r="3.4"/><circle cx="6" cy="14" r="3.4"/><circle cx="6" cy="24" r="3.4"/></g></svg>
<div class="cb" style="top:1122px"></div>
<svg style="left:1200px;top:1118px" width="36" height="36" viewBox="0 0 36 36"><path d="M10.8,4.6 a2.4,2.4 0 0 1 2.4,-2.4 h14.1 l6.4,6.8 v22.4 a2.4,2.4 0 0 1 -2.4,2.4 h-18.1 a2.4,2.4 0 0 1 -2.4,-2.4z" fill="#fff" stroke="#979797" stroke-width="1.6" stroke-linejoin="round"/><path d="M27.3,2.2 v5.8 a2,2 0 0 0 2,2 h4.4" fill="none" stroke="#979797" stroke-width="1.6"/><rect x="2.1" y="9.7" width="17.8" height="18" rx="2" fill="#3c8c56"/><text x="11" y="24" font-size="13" font-weight="bold" fill="#fff" text-anchor="middle" font-family="Liberation Sans">X</text><path d="M22.8,15 h7" stroke="#6cc58f" stroke-width="1.6"/><path d="M22.8,19 h7" stroke="#4aa36b" stroke-width="1.6"/><path d="M22.8,23 h7" stroke="#1b4a2b" stroke-width="1.6"/></svg>
<div class="t" style="left:1291px;top:1123px">Construction schedule 2024.xlsx</div>
<div class="t" style="left:1989px;top:1123px">Microsoft E...</div>
<div class="t" style="left:2189px;top:1123px">Robert Hammer</div>
<div class="t" style="left:2489px;top:1123px;letter-spacing:1.2px">12/02/2024</div>
<div class="t" style="left:2889px;top:1123px">30 KB</div>
<div class="t" style="left:3088px;top:1123px">V1</div>
<svg style="left:3163px;top:1121px" width="33" height="32" viewBox="0 0 33 32"><path class="star" d="M16.5,2.5 l4,8.6 l9.4,1.1 l-7,6.4 l1.9,9.3 l-8.3,-4.7 l-8.3,4.7 l1.9,-9.3 l-7,-6.4 l9.4,-1.1z"/></svg>
<svg style="left:3264px;top:1123px" width="12" height="30"><g class="keb"><circle cx="6" cy="4" r="3.4"/><circle cx="6" cy="14" r="3.4"/><circle cx="6" cy="24" r="3.4"/></g></svg>
<div class="cb" style="top:1222px"></div>
<svg style="left:1200px;top:1218px" width="36" height="36" viewBox="0 0 36 36"><path d="M10.8,4.6 a2.4,2.4 0 0 1 2.4,-2.4 h14.1 l6.4,6.8 v22.4 a2.4,2.4 0 0 1 -2.4,2.4 h-18.1 a2.4,2.4 0 0 1 -2.4,-2.4z" fill="#fff" stroke="#979797" stroke-width="1.6" stroke-linejoin="round"/><path d="M27.3,2.2 v5.8 a2,2 0 0 0 2,2 h4.4" fill="none" stroke="#979797" stroke-width="1.6"/><rect x="2.1" y="14.1" width="17.8" height="9.7" rx="2" fill="#f50d0d"/><text x="11" y="22" font-size="7.4" font-weight="bold" fill="#fff" text-anchor="middle" font-family="Liberation Sans">PDF</text><path d="M22.8,15 h7" stroke="#ff8a8a" stroke-width="1.6"/><path d="M22.8,19 h7" stroke="#ff5a5a" stroke-width="1.6"/><path d="M22.8,23 h7" stroke="#ee1c1c" stroke-width="1.6"/></svg>
<div class="t" style="left:1291px;top:1223px">Bill of quantities.pdf</div>
<div class="t" style="left:1989px;top:1223px">PDF</div>
<div class="t" style="left:2189px;top:1223px">Robert Hammer</div>
<div class="t" style="left:2489px;top:1223px;letter-spacing:1.2px">12/02/2024</div>
<div class="t" style="left:2889px;top:1223px">79 KB</div>
<div class="t" style="left:3088px;top:1223px">V1</div>
<svg style="left:3163px;top:1221px" width="33" height="32" viewBox="0 0 33 32"><path class="star" d="M16.5,2.5 l4,8.6 l9.4,1.1 l-7,6.4 l1.9,9.3 l-8.3,-4.7 l-8.3,4.7 l1.9,-9.3 l-7,-6.4 l9.4,-1.1z"/></svg>
<svg style="left:3264px;top:1223px" width="12" height="30"><g class="keb"><circle cx="6" cy="4" r="3.4"/><circle cx="6" cy="14" r="3.4"/><circle cx="6" cy="24" r="3.4"/></g></svg>
<!-- scrollbar -->
<div class="a" style="left:1050px;top:1580px;width:2280px;height:32px;background:#fafafa;border-top:1px solid #e8e8e8"></div>
<div class="a" style="left:1056px;top:1588px;width:1607px;height:16px;background:#bfbfbf;border-radius:8px"></div>
<!-- collapse tab -->
<div class="a" style="left:1017px;top:1382px;width:52px;height:90px;background:#ebf0f4;border:2px solid #b9c7d4;border-left:none;border-radius:0 22px 22px 0"></div>
<svg style="left:1030px;top:1411px" width="24" height="34"><polyline points="18.5,3.5 5.5,16 18.5,28.5" fill="none" stroke="#111" stroke-width="3.4" stroke-linecap="round" stroke-linejoin="round"/></svg>
<!-- help -->
<div class="a" style="left:3220px;top:1372px;width:100px;height:100px;border-radius:50%;background:#0464cb;box-shadow:0 3px 14px rgba(0,0,0,0.2)"></div>
<svg style="left:3220px;top:1372px" width="100" height="100"><path d="M36.8,42.2 A13.2,13.2 0 1 1 60.1,50.7 C55,54.5 49.5,56.5 49.5,61.7" fill="none" stroke="#fff" stroke-width="8.5" stroke-linecap="round"/><circle cx="49.5" cy="72.2" r="5.4" fill="#fff"/></svg>
<!-- arrows -->
<svg style="left:0;top:0" width="3360" height="1612">
  <g fill="#ff8600" stroke="#ff8600" stroke-width="2" stroke-linejoin="round">
    <path d="M275,590.5 L540,150.5 L529.5,141.5 L566,121.5 L565.5,163.5 L552,159 L284.5,596 Z"/>
    <path d="M1002,148.5 L1011.5,149.5 L890,1384 L905.5,1388.5 L876,1429.5 L855,1383.5 L872,1382 Z"/>
  </g>
  <circle cx="279.5" cy="593" r="5.6" fill="#ff8600"/>
  <ellipse cx="1006.7" cy="149" rx="4.9" ry="2.5" fill="#ff8600"/>
</svg>
<div class="a" style="left:0;top:-4px;width:3360px;height:1616px;border:2px solid rgba(255,255,255,0.2);border-top:none;border-radius:0 0 46px 46px;pointer-events:none"></div>
</div>
</body></html>
